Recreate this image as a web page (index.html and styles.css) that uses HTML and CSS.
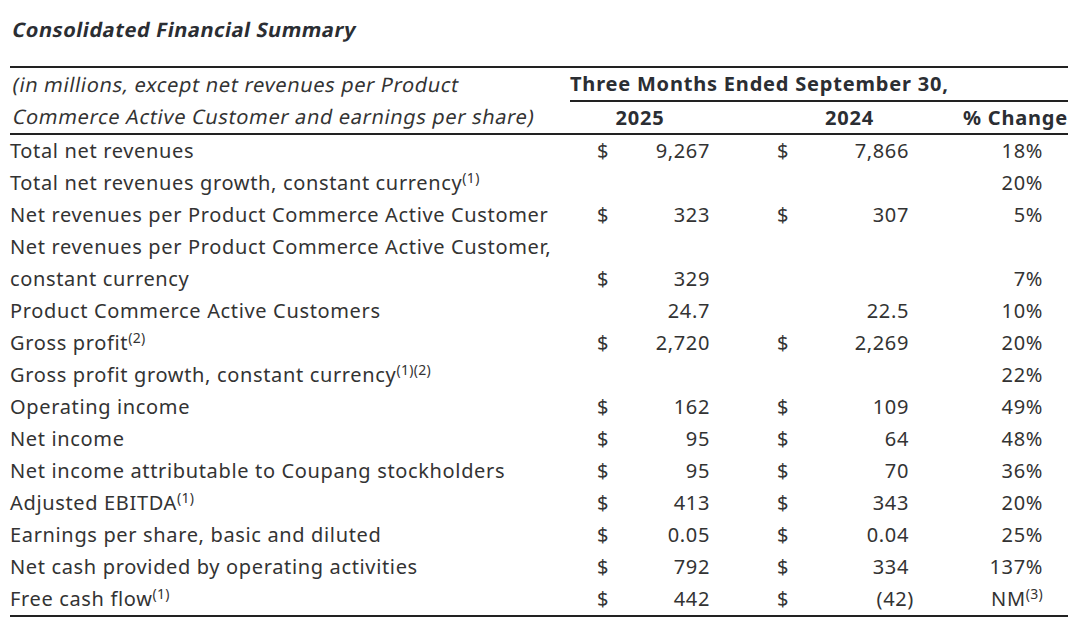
FILE: index.html
```html
<!DOCTYPE html>
<html lang="en">
<head>
<meta charset="utf-8">
<title>Consolidated Financial Summary</title>
<link rel="stylesheet" href="styles.css">
</head>
<body>
<div class="page">
  <h1 class="title"><span class="slant">Consolidated Financial Summary</span></h1>
  <table class="fin">
    <colgroup>
      <col class="c-label">
      <col class="c-cur1">
      <col class="c-val1">
      <col class="c-cur2">
      <col class="c-val2">
      <col class="c-pct">
    </colgroup>
    <thead>
      <tr class="h1">
        <th class="note" rowspan="2"><span class="slant">(in millions, except net revenues per Product</span><br><span class="slant">Commerce Active Customer and earnings per share)</span></th>
        <th class="period" colspan="5">Three Months Ended September 30,</th>
      </tr>
      <tr class="h2">
        <th class="yr1" colspan="2">2025</th>
        <th class="yr2" colspan="2">2024</th>
        <th class="chg">% Change</th>
      </tr>
    </thead>
    <tbody>
      <tr><td class="lbl">Total net revenues</td><td class="cur">$</td><td class="num">9,267</td><td class="cur">$</td><td class="num">7,866</td><td class="pct">18%</td></tr>
      <tr><td class="lbl">Total net revenues growth, constant currency<sup>(1)</sup></td><td class="cur"></td><td class="num"></td><td class="cur"></td><td class="num"></td><td class="pct">20%</td></tr>
      <tr><td class="lbl">Net revenues per Product Commerce Active Customer</td><td class="cur">$</td><td class="num">323</td><td class="cur">$</td><td class="num">307</td><td class="pct">5%</td></tr>
      <tr><td class="lbl">Net revenues per Product Commerce Active Customer,<br>constant currency</td><td class="cur">$</td><td class="num">329</td><td class="cur"></td><td class="num"></td><td class="pct">7%</td></tr>
      <tr><td class="lbl">Product Commerce Active Customers</td><td class="cur"></td><td class="num">24.7</td><td class="cur"></td><td class="num">22.5</td><td class="pct">10%</td></tr>
      <tr><td class="lbl">Gross profit<sup>(2)</sup></td><td class="cur">$</td><td class="num">2,720</td><td class="cur">$</td><td class="num">2,269</td><td class="pct">20%</td></tr>
      <tr><td class="lbl">Gross profit growth, constant currency<sup>(1)(2)</sup></td><td class="cur"></td><td class="num"></td><td class="cur"></td><td class="num"></td><td class="pct">22%</td></tr>
      <tr><td class="lbl">Operating income</td><td class="cur">$</td><td class="num">162</td><td class="cur">$</td><td class="num">109</td><td class="pct">49%</td></tr>
      <tr><td class="lbl">Net income</td><td class="cur">$</td><td class="num">95</td><td class="cur">$</td><td class="num">64</td><td class="pct">48%</td></tr>
      <tr><td class="lbl">Net income attributable to Coupang stockholders</td><td class="cur">$</td><td class="num">95</td><td class="cur">$</td><td class="num">70</td><td class="pct">36%</td></tr>
      <tr><td class="lbl">Adjusted EBITDA<sup>(1)</sup></td><td class="cur">$</td><td class="num">413</td><td class="cur">$</td><td class="num">343</td><td class="pct">20%</td></tr>
      <tr><td class="lbl">Earnings per share, basic and diluted</td><td class="cur">$</td><td class="num">0.05</td><td class="cur">$</td><td class="num">0.04</td><td class="pct">25%</td></tr>
      <tr><td class="lbl">Net cash provided by operating activities</td><td class="cur">$</td><td class="num">792</td><td class="cur">$</td><td class="num">334</td><td class="pct">137%</td></tr>
      <tr class="last"><td class="lbl">Free cash flow<sup>(1)</sup></td><td class="cur">$</td><td class="num">442</td><td class="cur">$</td><td class="num"><span class="neg">(42)</span></td><td class="pct">NM<sup>(3)</sup></td></tr>
    </tbody>
  </table>
</div>
</body>
</html>
```

FILE: styles.css
```css
html, body {
  margin: 0;
  padding: 0;
  background: #ffffff;
}

body {
  font-family: "Noto Sans", "Open Sans", "DejaVu Sans", sans-serif;
  color: #333333;
}

.page {
  padding: 16px 12px 0 10px;
}

.slant {
  display: inline-block;
  transform: skewX(-11deg);
  transform-origin: 0 100%;
}

.title {
  margin: 0 0 22px 0;
  font-size: 20px;
  line-height: 28px;
  font-weight: 700;
  letter-spacing: 0.6px;
  color: #2b2e33;
}

.fin {
  width: 1058px;
  table-layout: fixed;
  border-collapse: separate;
  border-spacing: 0;
  font-size: 20px;
  letter-spacing: 0.65px;
}

.c-label { width: 560px; }
.c-cur1 { width: 50px; }
.c-val1 { width: 90px; }
.c-cur2 { width: 90px; }
.c-val2 { width: 109px; }
.c-pct { width: 159px; }

.fin th,
.fin td {
  padding: 0;
  white-space: nowrap;
}

.fin th {
  color: #2b2e33;
  font-weight: 700;
  letter-spacing: 0.8px;
}

.h1 th {
  border-top: 2px solid #222222;
}

.fin th.note {
  font-weight: 400;
  letter-spacing: 0.65px;
  text-align: left;
  line-height: 32px;
  vertical-align: middle;
  color: #333333;
  border-bottom: 2px solid #222222;
}

.period {
  text-align: left;
  height: 32px;
  line-height: 32px;
  border-bottom: 2px solid #222222;
}

.h2 th {
  height: 31px;
  line-height: 31px;
  border-bottom: 2px solid #222222;
}

.yr1 { text-align: center; }
.fin th.yr2 { text-align: center; padding-left: 80px; }
.chg { text-align: right; }

.fin td {
  line-height: 32px;
  height: 32px;
  vertical-align: bottom;
}

.lbl { text-align: left; }
.fin td.cur { text-align: left; padding-left: 27px; }
.fin td.cur:nth-child(4) { padding-left: 67px; }
.num { text-align: right; }
.fin td.pct { text-align: right; padding-right: 25px; }

.last td {
  border-bottom: 2px solid #222222;
}

.neg {
  margin-right: -5px;
}

sup {
  font-size: 14px;
  line-height: 0;
  vertical-align: 7px;
  letter-spacing: 0.3px;
}
```
